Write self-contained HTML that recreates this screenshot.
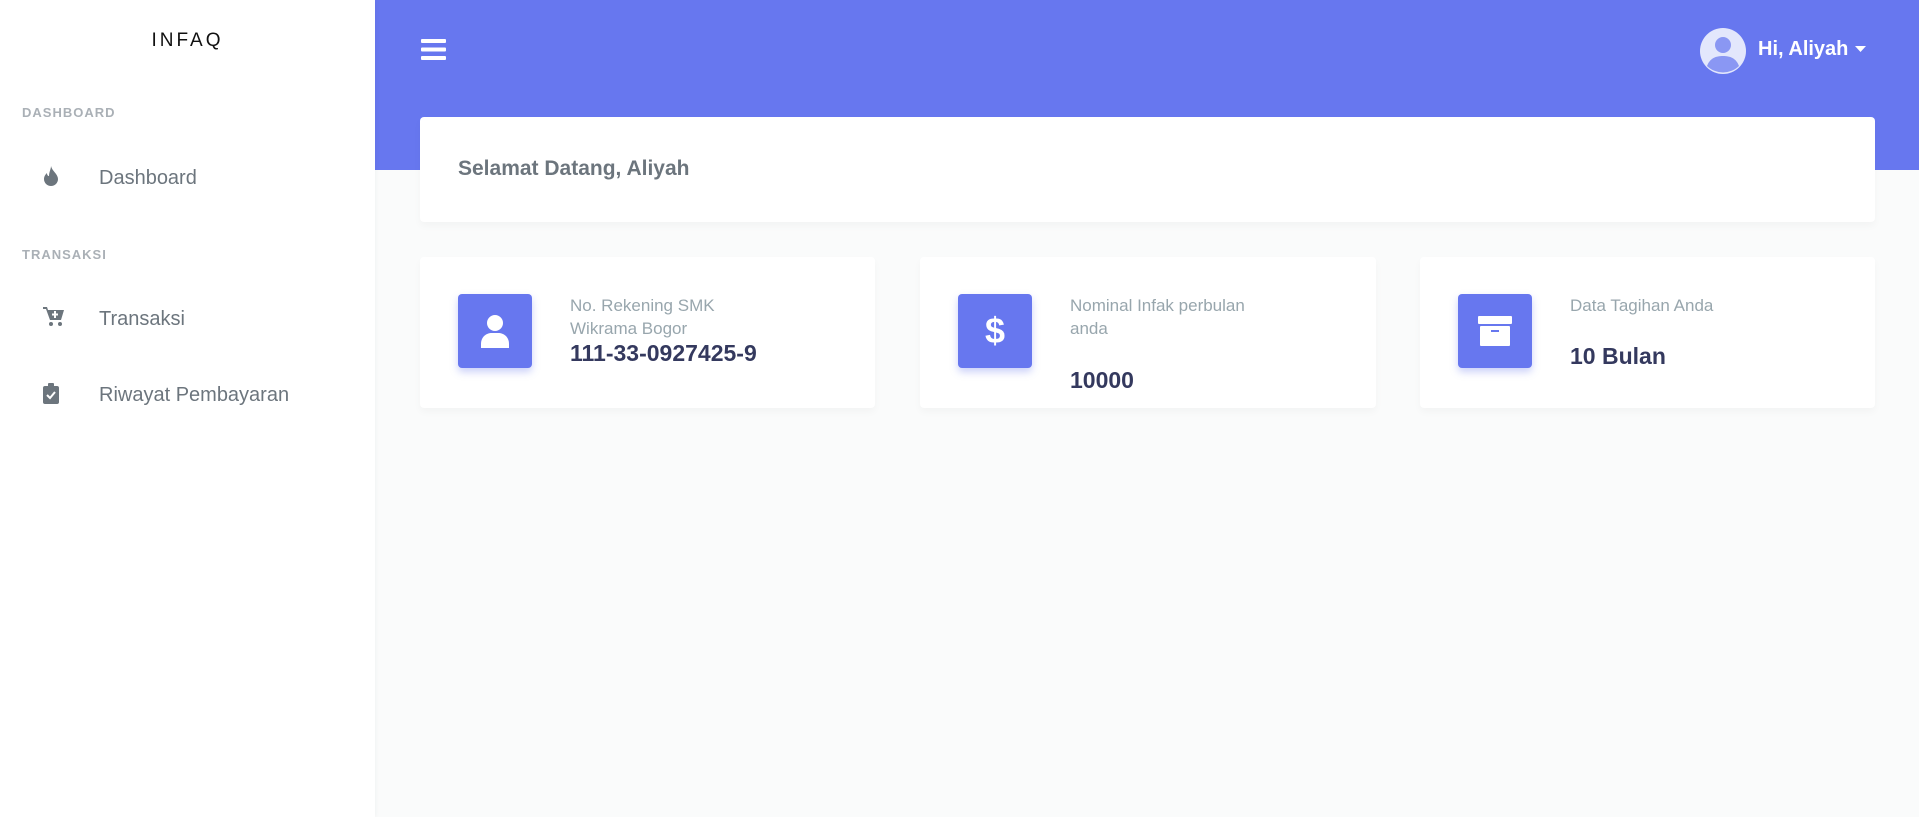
<!DOCTYPE html>
<html><head><meta charset="utf-8"><style>
*{box-sizing:border-box;margin:0;padding:0}
body{width:1919px;height:817px;background:#fafbfb;font-family:"Liberation Sans",sans-serif;position:relative;overflow:hidden}
.side{position:absolute;left:0;top:0;width:375px;height:817px;background:#fff;box-shadow:1px 0 4px rgba(0,0,0,.04);z-index:2}
.brand{position:absolute;top:30px;left:0;width:375px;text-align:center;font-size:19px;letter-spacing:3px;color:#111}
.hd{position:absolute;left:22px;font-size:13px;letter-spacing:1px;color:#aab0b6;font-weight:bold}
.it{position:absolute;left:99px;font-size:20px;color:#6c757d}
.ic{position:absolute;left:43px}
.top{position:absolute;left:375px;top:0;width:1544px;height:170px;background:#6777ef}
.card{position:absolute;background:#fff;border-radius:4px;box-shadow:0 4px 8px rgba(0,0,0,.03)}
.box{position:absolute;left:38px;top:37px;width:74px;height:74px;background:#6777ef;border-radius:4px;box-shadow:0 4px 8px rgba(103,119,239,.35);display:flex;align-items:center;justify-content:center}
.lbl{position:absolute;left:150px;top:37px;font-size:17px;line-height:23px;color:#98a6ad;width:240px}
.val{position:absolute;left:150px;font-size:23px;font-weight:bold;color:#34395e}
</style></head><body>
<div class="side">
<div class="brand">INFAQ</div>
<div class="hd" style="top:105px">DASHBOARD</div>
<svg class="ic" style="top:166px" width="16" height="20" viewBox="0 0 16 20"><path d="M8 0C9 5 15 8 15 13a7 7 0 0 1-14 0c0-3 2-5 3-6 0 2 1 3 2 3C6 6 8 3 8 0z" fill="#6c757d"/></svg>
<div class="it" style="top:167px">Dashboard</div>
<div class="hd" style="top:247px">TRANSAKSI</div>
<svg class="ic" style="top:307px" width="22" height="20" viewBox="0 0 22 20"><path d="M0 0h4l1 3h16l-3 10H7L3 2H0z" fill="#6c757d"/><circle cx="8" cy="17" r="2" fill="#6c757d"/><circle cx="17" cy="17" r="2" fill="#6c757d"/><path d="M12 4v7M9 7.5h6" stroke="#fff" stroke-width="2"/></svg>
<div class="it" style="top:308px">Transaksi</div>
<svg class="ic" style="top:383px" width="16" height="21" viewBox="0 0 16 21"><rect x="0" y="3" width="16" height="18" rx="2" fill="#6c757d"/><rect x="5" y="0" width="6" height="5" rx="1" fill="#6c757d"/><path d="M4 12l3 3 5-6" stroke="#fff" stroke-width="2" fill="none"/></svg>
<div class="it" style="top:384px">Riwayat Pembayaran</div>
</div>
<div class="top"></div>
<svg style="position:absolute;left:421px;top:39px" width="25" height="21" viewBox="0 0 25 21"><rect y="0" width="25" height="4" rx="1" fill="#fff"/><rect y="8.5" width="25" height="4" rx="1" fill="#fff"/><rect y="17" width="25" height="4" rx="1" fill="#fff"/></svg>
<svg style="position:absolute;left:1700px;top:28px" width="46" height="46" viewBox="0 0 46 46"><circle cx="23" cy="23" r="23" fill="#e3e7fc"/><circle cx="23" cy="17" r="8" fill="#8a97f3"/><path d="M7 38c3-8 9-10 16-10s13 2 16 10a23 23 0 0 1-32 0z" fill="#8a97f3"/></svg>
<div style="position:absolute;left:1758px;top:38px;font-size:20px;font-weight:bold;color:#fff">Hi, Aliyah</div>
<svg style="position:absolute;left:1855px;top:46px" width="11" height="7"><path d="M0 0h11L5.5 6z" fill="#fff"/></svg>
<div class="card" style="left:420px;top:117px;width:1455px;height:105px"><div style="position:absolute;left:38px;top:40px;font-size:21px;font-weight:bold;color:#6c757d">Selamat Datang, Aliyah</div></div>
<div class="card" style="left:420px;top:257px;width:455px;height:151px">
<div class="box"><svg width="30" height="34" viewBox="0 0 30 34"><circle cx="15" cy="9" r="8" fill="#fff"/><path d="M1 34v-4c0-7 5-11 11-11h6c6 0 11 4 11 11v4z" fill="#fff"/></svg></div>
<div class="lbl">No. Rekening SMK<br>Wikrama Bogor</div><div class="val" style="top:83px">111-33-0927425-9</div></div>
<div class="card" style="left:920px;top:257px;width:456px;height:151px">
<div class="box"><div style="color:#fff;font-size:36px;font-weight:bold">$</div></div>
<div class="lbl">Nominal Infak perbulan<br>anda</div><div class="val" style="top:110px">10000</div></div>
<div class="card" style="left:1420px;top:257px;width:455px;height:151px">
<div class="box"><svg width="34" height="30" viewBox="0 0 34 30"><rect x="0" y="0" width="34" height="8" rx="1" fill="#fff"/><rect x="2" y="10" width="30" height="20" rx="1" fill="#fff"/><rect x="13" y="14" width="8" height="2" fill="#6777ef"/></svg></div>
<div class="lbl">Data Tagihan Anda</div><div class="val" style="top:86px">10 Bulan</div></div>
</body></html>
